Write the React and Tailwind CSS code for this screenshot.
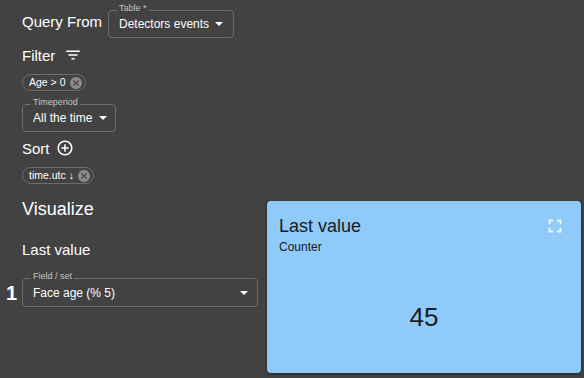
import React from "react";

const Caret = () => (
  <svg width="8" height="4" viewBox="0 0 8 4" className="shrink-0">
    <path d="M0 0h8L4 4z" fill="#ffffff" />
  </svg>
);

const CancelIcon = () => (
  <svg width="12" height="12" viewBox="2 2 20 20" className="shrink-0">
    <path
      fill="#8a8a8a"
      d="M12 2C6.47 2 2 6.47 2 12s4.47 10 10 10 10-4.47 10-10S17.53 2 12 2zm5 13.59L15.59 17 12 13.41 8.41 17 7 15.59 10.59 12 7 8.41 8.41 7 12 10.59 15.59 7 17 8.41 13.41 12 17 15.59z"
    />
  </svg>
);

function SelectBox({ label, value, className }) {
  return (
    <div
      className={
        "relative h-[28px] flex items-center justify-between border border-[#6e6e6e] rounded-[4px] pl-[10px] pr-[9px] " +
        className
      }
    >
      <span className="absolute top-[-7px] left-[8px] px-[2px] bg-[#424242] text-[9px] leading-[9px] text-[#c4c4c4]">
        {label}
      </span>
      <span className="text-[12px] leading-[12px] text-white whitespace-nowrap">{value}</span>
      <Caret />
    </div>
  );
}

function Chip({ children }) {
  return (
    <div className="h-[17px] inline-flex items-center self-start border border-[#6e6e6e] rounded-full pl-[6px] pr-[3px] gap-[4px]">
      <span className="text-[10.5px] leading-[11px] text-white whitespace-nowrap">{children}</span>
      <CancelIcon />
    </div>
  );
}

export default function App() {
  return (
    <div
      className="w-[584px] h-[378px] bg-[#424242] text-white overflow-hidden flex flex-col"
      style={{ fontFamily: '"Liberation Sans", Arial, sans-serif' }}
    >
      {/* Query section */}
      <div className="flex flex-col pl-[22px] pt-[10px]">
        <div className="flex items-start">
          <span className="text-[15px] leading-[15px] mt-[4px] whitespace-nowrap">Query From</span>
          <SelectBox label="Table *" value="Detectors events" className="ml-[6px] w-[126px] pr-[10px]" />
        </div>

        <div className="flex items-center h-[18px] mt-[8px]">
          <span className="text-[15px] leading-[15px]">Filter</span>
          <svg width="18" height="18" viewBox="0 0 24 24" className="ml-[9px]">
            <path fill="#ffffff" d="M10 18h4v-2h-4v2zM3 6v2h18V6H3zm3 7h12v-2H6v2z" />
          </svg>
        </div>

        <div className="mt-[10px] flex">
          <Chip>Age &gt; 0</Chip>
        </div>

        <div className="mt-[13px] flex">
          <SelectBox label="Timeperiod" value="All the time" className="w-[94px] gap-[7px]" />
        </div>

        <div className="flex items-center h-[18px] mt-[7px]">
          <span className="text-[15px] leading-[15px]">Sort</span>
          <svg width="18" height="18" viewBox="0 0 24 24" className="ml-[6px]">
            <path
              fill="#ffffff"
              d="M13 7h-2v4H7v2h4v4h2v-4h4v-2h-4V7zm-1-5C6.48 2 2 6.48 2 12s4.48 10 10 10 10-4.48 10-10S17.52 2 12 2zm0 18c-4.41 0-8-3.59-8-8s3.59-8 8-8 8 3.59 8 8-3.59 8-8 8z"
            />
          </svg>
        </div>

        <div className="mt-[10px] flex">
          <Chip>time.utc ↓</Chip>
        </div>
      </div>

      {/* Visualize section */}
      <div className="flex mt-[16px]">
        <div className="w-[267px] flex flex-col">
          <span className="pl-[22px] text-[18px] leading-[18px]">Visualize</span>
          <span className="pl-[22px] mt-[24px] text-[15px] leading-[15px]">Last value</span>
          <div className="flex items-center mt-[21px]">
            <span className="w-[22px] pl-[6px] text-[20px] leading-[20px] font-bold">1</span>
            <SelectBox label="Field / set" value="Face age (% 5)" className="w-[236px] h-[29px]" />
          </div>
        </div>

        <div className="mt-[1px] w-[314px] h-[172px] bg-[#90caf9] rounded-[4px] shadow-[0_1px_3px_rgba(0,0,0,0.5)] flex flex-col text-[#161c22]">
          <div className="flex items-start justify-between pl-[12px] pr-[15px] pt-[14px]">
            <div className="flex flex-col pt-[2px]">
              <span className="text-[18px] leading-[18px]">Last value</span>
              <span className="text-[12px] leading-[12px] mt-[6px]">Counter</span>
            </div>
            <svg width="22" height="22" viewBox="0 0 24 24">
              <path
                fill="#eef7ff"
                d="M7 14H5v5h5v-2H7v-3zm-2-4h2V7h3V5H5v5zm12 7h-3v2h5v-5h-2v3zM14 5v2h3v3h2V5h-5z"
              />
            </svg>
          </div>
          <div className="flex justify-center mt-[51px]">
            <span className="text-[26px] leading-[26px]">45</span>
          </div>
        </div>
      </div>
    </div>
  );
}
